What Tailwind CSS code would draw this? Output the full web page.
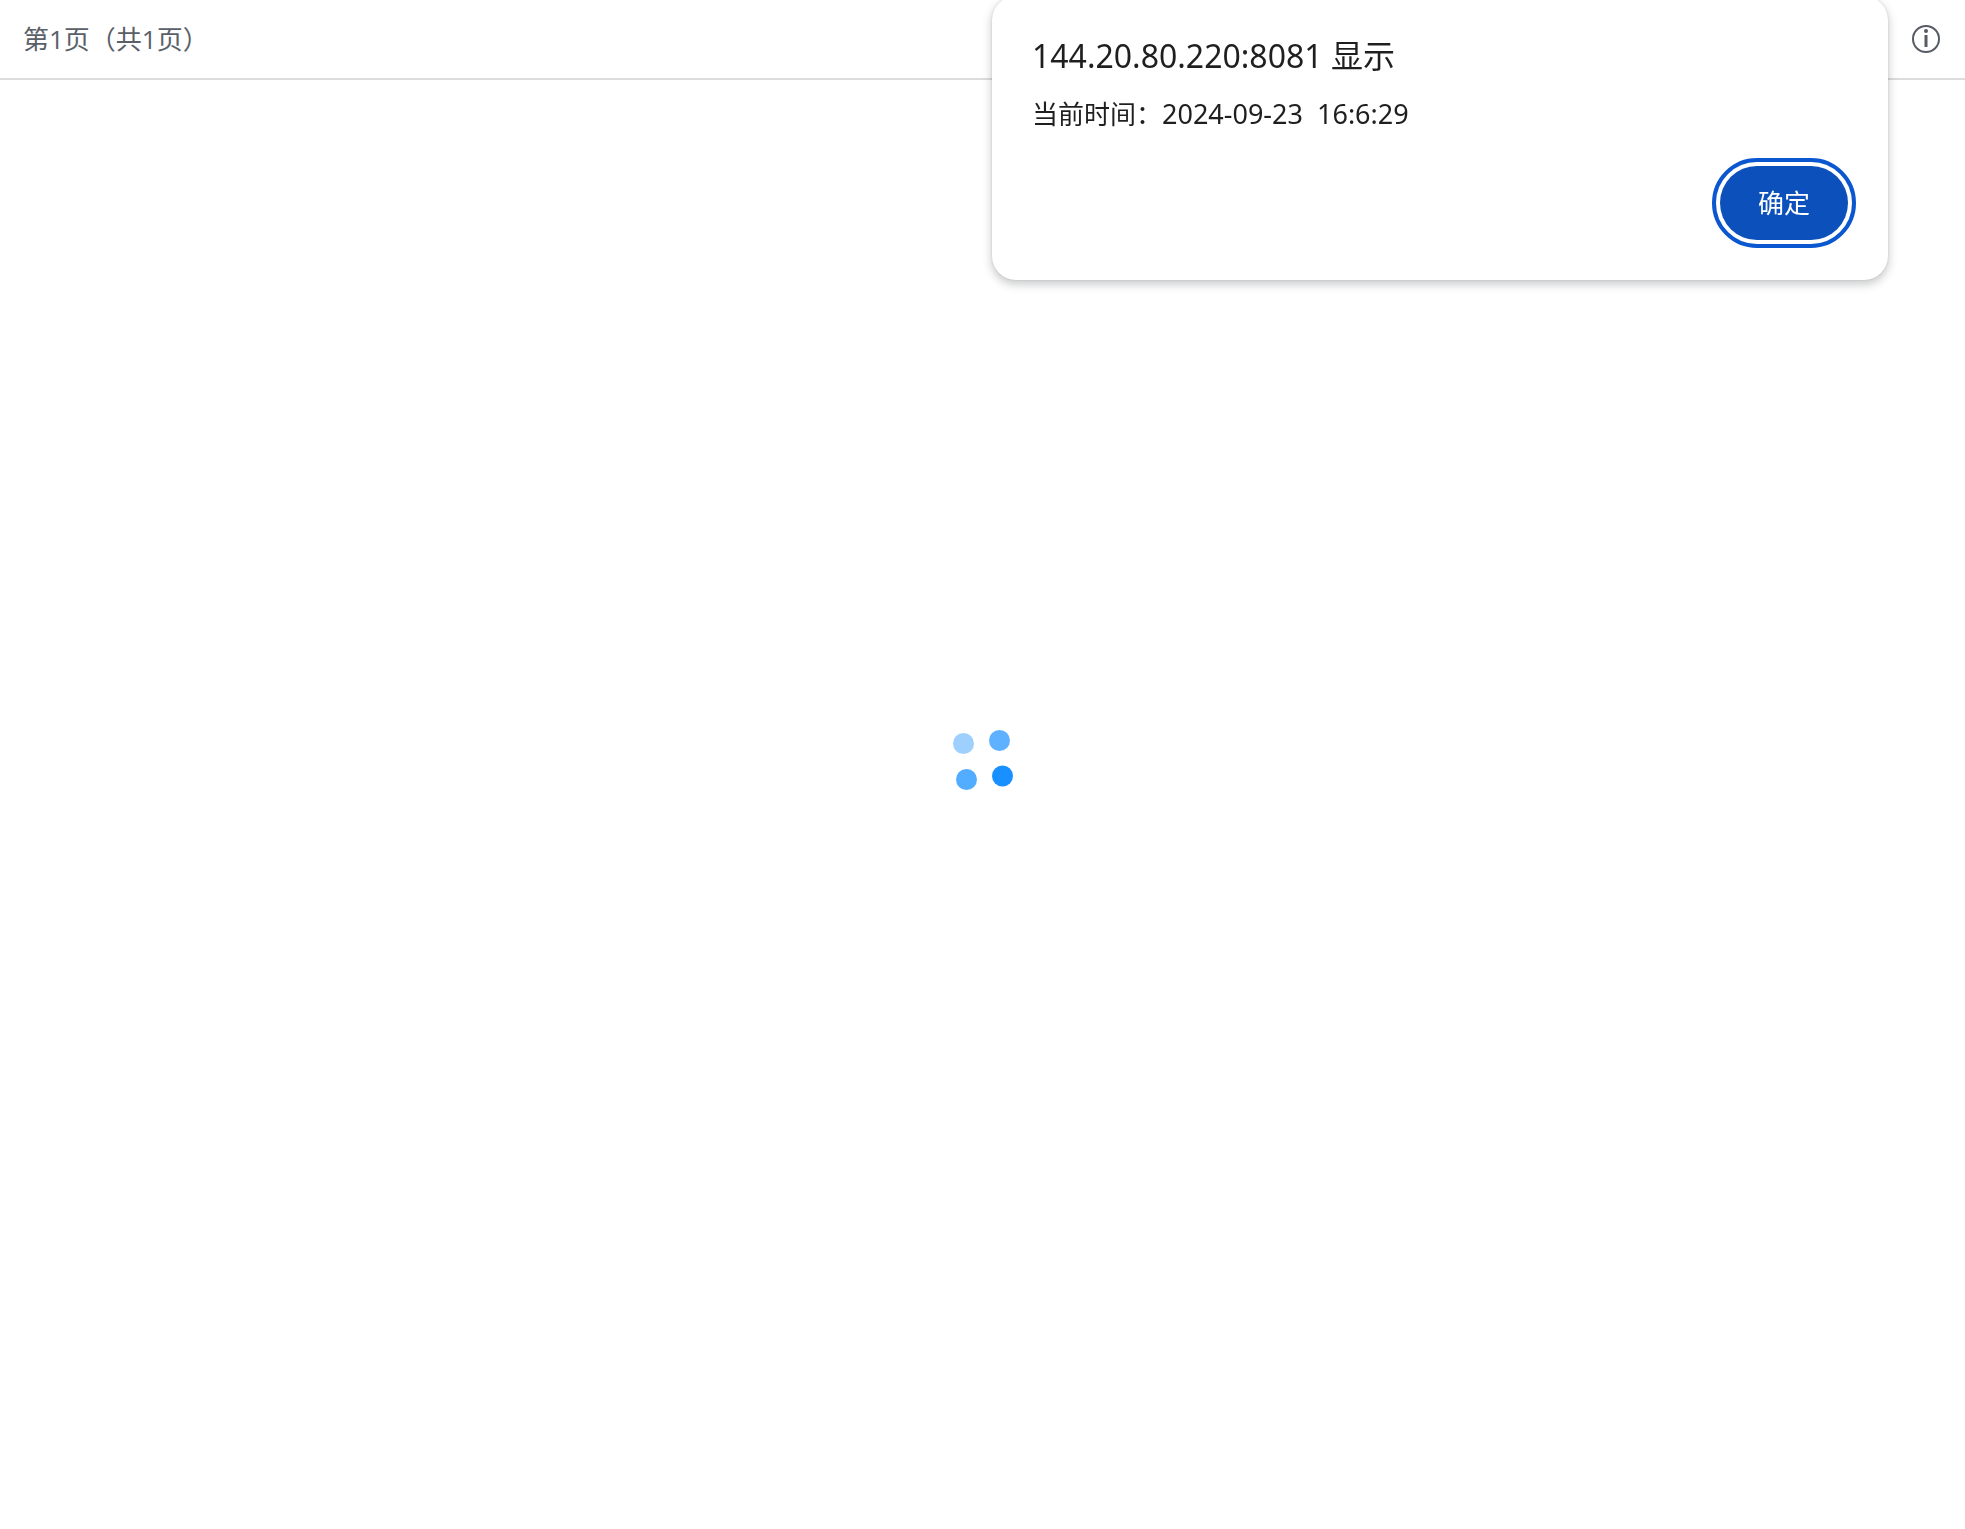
<!DOCTYPE html>
<html lang="zh-CN">
<head>
    <meta charset="UTF-8">
    <meta name="viewport" content="width=device-width, initial-scale=1.0">
    <title>第1页（共1页）</title>
    <script src="https://cdn.jsdelivr.net/npm/@tailwindcss/browser@4"></script>
</head>
<body class="min-h-screen bg-white font-['Noto_Sans','Noto_Sans_CJK_SC',sans-serif]">
    <header class="flex h-20 items-center justify-between border-b-2 border-[#dcdcdc] pr-[25px] pl-[23px] text-[26px] text-[#5a6068]">
        <p class="font-['Open_Sans','Noto_Sans_CJK_SC',sans-serif]">第1页（共1页）</p>
        <button type="button" aria-label="信息" class="text-[#565b64]">
            <svg class="size-7" viewBox="0 0 28 28" fill="none">
                <circle cx="14" cy="14" r="13" stroke="currentColor" stroke-width="2" />
                <circle cx="14" cy="6" r="2" fill="currentColor" />
                <path d="M14 10v12" stroke="currentColor" stroke-width="3" />
            </svg>
        </button>
    </header>

    <!-- Loading overlay -->
    <div class="fixed inset-0 grid place-items-center pb-2.5" role="status" aria-label="加载中">
        <svg class="size-16" viewBox="0 0 64 64" fill="#1890ff">
            <circle cx="12.5" cy="15.5" r="10.5" opacity="0.42" />
            <circle cx="48.5" cy="12.5" r="10.5" opacity="0.7" />
            <circle cx="15.5" cy="51.5" r="10.5" opacity="0.75" />
            <circle cx="51.5" cy="48" r="10.5" />
        </svg>
    </div>

    <!-- Alert dialog -->
    <div role="alertdialog" aria-labelledby="alert-title" aria-describedby="alert-message"
        class="fixed -top-1 right-[77px] flex w-[896px] flex-col rounded-3xl bg-white px-8 pt-10 pb-10 text-[#1f1f1f] shadow-[0_0_2px_rgba(60,64,67,0.2),0_4px_8px_1px_rgba(60,64,67,0.25)]">
        <h1 id="alert-title" class="px-2 text-[32px] leading-10">144.20.80.220:8081 显示</h1>
        <p id="alert-message" class="mt-5 px-2 text-[26px] leading-9 whitespace-pre">当前时间：<time class="text-[27px]">2024-09-23  16:6:29</time></p>
        <button type="button" autofocus
            class="mt-[34px] mr-2 h-[74px] w-32 self-end rounded-full bg-[#0b50bb] text-[26px] text-white outline-4 outline-offset-4 outline-[#0b57d0]">确定</button>
    </div>
</body>
</html>
